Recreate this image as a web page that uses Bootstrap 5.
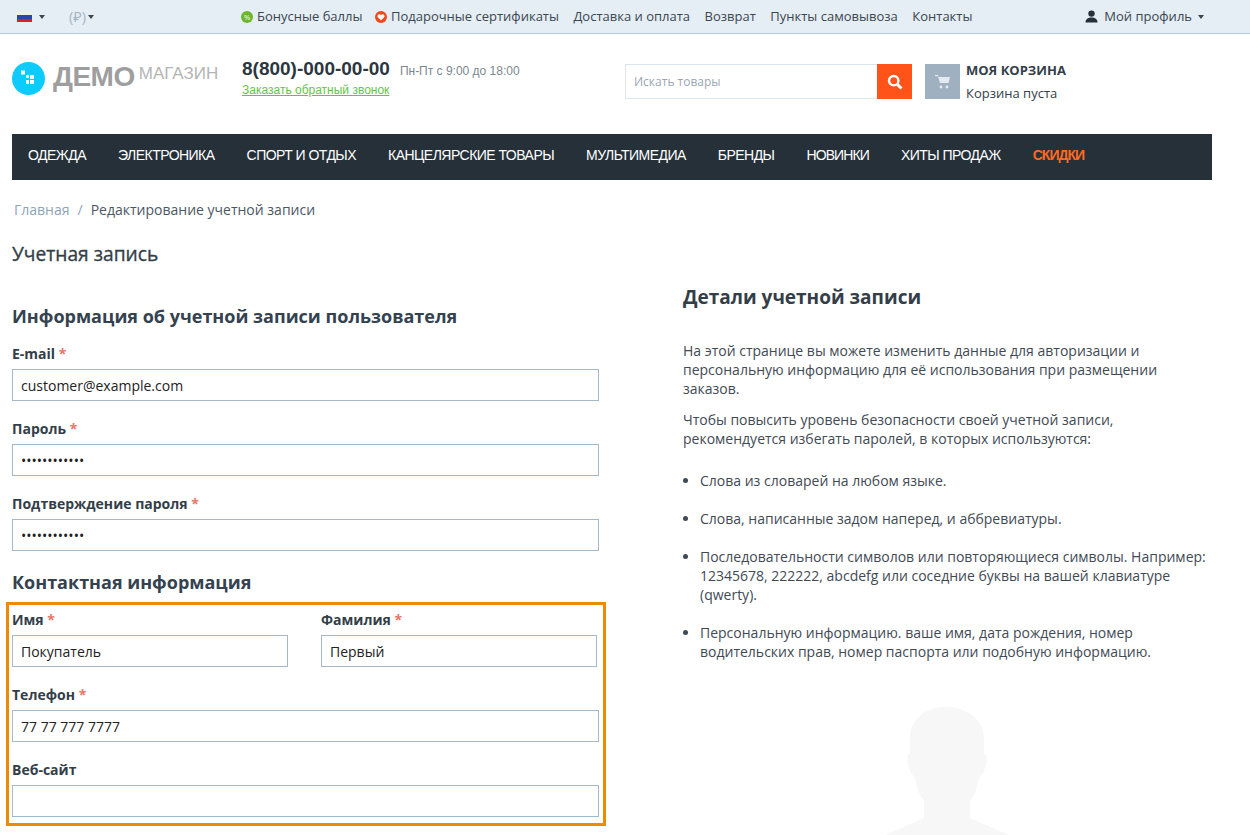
<!DOCTYPE html>
<html lang="ru">
<head>
<meta charset="utf-8">
<title>Учетная запись</title>
<link href="https://cdn.jsdelivr.net/npm/bootstrap@5.3.0/dist/css/bootstrap.min.css" rel="stylesheet">
<style>
html,body{height:835px;overflow:hidden}
body{font-family:"Open Sans","Noto Sans",sans-serif;font-size:13px;color:#333e48;background:#fff;line-height:19px}
a{text-decoration:none;color:inherit}
.topstrip{height:34px;background:#e5eef4;border-bottom:1px solid #b3cad8;font-size:13px;color:#3b4650}
.wrapbox{width:1200px;margin-left:12px}
.caret-mini{display:inline-block;border-top:4px solid #3b4650;border-left:3px solid transparent;border-right:3px solid transparent;vertical-align:middle}
.flag-ru{width:15px;height:10px;display:block;background:linear-gradient(#eee 0 33%,#2b45a8 33% 66%,#d8202c 66%)}
.cur-dim{color:#a5b7c6;font-size:14.5px}
.toplinks{gap:14.5px;margin-left:147px}
.toplinks .gift{margin-left:-2px}
.midrow{height:100px}
.logo-text{font-family:"Liberation Sans",sans-serif;font-weight:700;font-size:28px;color:#9e9e9e;letter-spacing:-.5px;line-height:1;margin-top:-4px}
.logo-sub{font-family:"Liberation Sans",sans-serif;font-size:17px;color:#b4b4b4;line-height:1;margin-top:-10px}
.phone{font-family:"Liberation Sans",sans-serif;font-size:19px;font-weight:700;color:#2b3640;line-height:22px}
.hours{font-family:"Liberation Sans",sans-serif;font-size:12px;color:#7b8790;margin-left:10px}
.callback{font-family:"Liberation Sans",sans-serif;font-size:12px;color:#6abf4b;text-decoration:underline;line-height:14px;display:block;margin-top:2px}
.searchbox{width:252px;height:35px;border:1px solid #dbe5ed;border-right:0;font-size:12px;color:#9aa6b2;padding-left:8px}
.searchgo{width:35px;height:35px;background:#ff5319}
.cartsq{width:35px;height:35px;background:#9fb1c0}
.cart-title{font-weight:700;font-size:13px;line-height:19px;color:#333e48}
.mainnav{height:46px;background:#253039;font-family:"Liberation Sans",sans-serif;font-size:14px;letter-spacing:-.53px;color:#fff;padding:0 0 4px 16px;gap:32px}
.mainnav .tightitem{letter-spacing:-.9px}
.mainnav .sale{color:#ff6a1f;font-weight:700;letter-spacing:-1px}
.crumbs{margin-top:20px;height:19px;padding-left:2px;font-size:14px;color:#4b5863}
.crumbs a{color:#8da3b6}
.crumbs i{font-style:normal;color:#8da3b6;margin:0 8px}
.pagetitle{font-size:19.2px;font-weight:400;-webkit-text-stroke:.35px #333e48;line-height:27px;margin:21px 0 0}
.leftcol{width:587px;margin-top:37px}
.rightcol{width:529px;margin-left:84px;margin-top:18px;font-size:14px;color:#3f4a54}
.sechead{font-size:18px;font-weight:700;line-height:24px;color:#34424f;margin:0 0 16px}
.sechead.secnext{margin-top:19px}
.fieldlbl{font-size:14px;font-weight:700;display:block;line-height:19px;margin:0 0 6px;color:#333e48}
.fieldlbl em{font-style:normal;color:#e8766a}
.fieldinp{display:block;width:100%;height:32px;border:1px solid #a5b8c8;border-radius:0;padding:0 8px;font-size:14px;font-family:inherit;color:#222;background:#fff;outline:0}
.fieldset-g{margin-bottom:18px}
.fieldset-g.lastinp{margin-bottom:0}
.hilite{position:absolute;left:6px;top:602px;width:600px;height:224px;border:3px solid #ee8a00;pointer-events:none}
.detailhead{font-size:19px;font-weight:700;line-height:25px;margin:0 0 31px;color:#333e48}
.rightcol p{margin:0 0 12px}
.rightcol p.lastp{margin-bottom:23px}
.tips{padding-left:17px;margin:0}
.tips li{margin-bottom:19px}
.silhouette{position:absolute;left:885px;top:706px;width:124px;height:129px}
</style>
</head>
<body>
<div class="topstrip">
  <div class="wrapbox d-flex align-items-center h-100 position-relative">
    <div class="d-flex align-items-center" style="gap:7px;margin-left:5px"><span class="flag-ru"></span><span class="caret-mini"></span></div>
    <div class="d-flex align-items-center cur-dim" style="gap:2px;margin-left:24px"><span>(₽)</span><span class="caret-mini"></span></div>
    <div class="d-flex align-items-center toplinks">
      <a class="d-flex align-items-center" style="gap:4px" href="#"><svg width="12" height="12" viewBox="0 0 12 12"><circle cx="6" cy="6" r="6" fill="#6cb52d"/><text x="6" y="8.5" font-size="7" font-weight="700" fill="#d9efc6" text-anchor="middle" font-family="Liberation Sans">%</text></svg>Бонусные баллы</a>
      <a class="d-flex align-items-center gift" style="gap:4px" href="#"><svg width="12" height="12" viewBox="0 0 12 12"><circle cx="6" cy="6" r="6" fill="#f0491d"/><path d="M6 9.3 3 6.4a1.7 1.7 0 0 1 0-2.5 1.8 1.8 0 0 1 3 .5 1.8 1.8 0 0 1 3-.5 1.7 1.7 0 0 1 0 2.5z" fill="#fff"/></svg>Подарочные сертификаты</a>
      <a href="#">Доставка и оплата</a>
      <a href="#">Возврат</a>
      <a href="#">Пункты самовывоза</a>
      <a href="#">Контакты</a>
    </div>
    <div class="d-flex align-items-center ms-auto" style="gap:6px;margin-right:8px">
      <svg width="13" height="13" viewBox="0 0 13 13"><circle cx="6.5" cy="3.6" r="3.2" fill="#253039"/><path d="M.5 12.5c0-3.4 2.4-5 6-5s6 1.6 6 5z" fill="#253039"/></svg>
      <span>Мой профиль</span><span class="caret-mini"></span>
    </div>
  </div>
</div>
<div class="wrapbox">
  <div class="midrow d-flex align-items-start">
    <div class="d-flex align-items-center" style="margin-top:28px;width:230px">
      <svg width="33" height="33" viewBox="0 0 33 33"><circle cx="16.5" cy="16.5" r="16.5" fill="#0ccbff"/><g fill="#fff"><rect x="9" y="8.5" width="4" height="4"/><rect x="14" y="13" width="3" height="3"/><rect x="18" y="13" width="4" height="4"/><rect x="18" y="18" width="4" height="4"/><rect x="14" y="18" width="3" height="4"/></g></svg>
      <span class="logo-text ms-2">ДЕМО</span><span class="logo-sub ms-1">МАГАЗИН</span>
    </div>
    <div style="margin-top:24px;width:383px">
      <div class="d-flex align-items-baseline"><span class="phone">8(800)-000-00-00</span><span class="hours">Пн-Пт с 9:00 до 18:00</span></div>
      <a class="callback" href="#">Заказать обратный звонок</a>
    </div>
    <div class="d-flex" style="margin-top:30px"><div class="searchbox d-flex align-items-center">Искать товары</div>
      <div class="searchgo d-flex align-items-center justify-content-center"><svg width="16" height="16" viewBox="0 0 16 16" fill="none" stroke="#fff"><circle cx="6.7" cy="6.7" r="4.7" stroke-width="2.4"/><path d="m10.2 10.2 4.3 4.3" stroke-width="3"/></svg></div>
    </div>
    <div class="d-flex" style="margin-top:27px;margin-left:13px">
      <div class="cartsq d-flex align-items-center justify-content-center" style="margin-top:3px"><svg width="16" height="15" viewBox="0 0 16 15" fill="#e4ebf0"><path d="M0 1h3l.6 2H15l-1.5 6H5L3 2.2H0z"/><circle cx="6" cy="13" r="1.4"/><circle cx="12" cy="13" r="1.4"/></svg></div>
      <div style="margin-left:6px"><div class="cart-title">МОЯ КОРЗИНА</div><div style="margin-top:4px">Корзина пуста</div></div>
    </div>
  </div>
  <nav class="mainnav d-flex align-items-center">
    <a href="#">ОДЕЖДА</a><a href="#">ЭЛЕКТРОНИКА</a><a href="#">СПОРТ И ОТДЫХ</a><a href="#">КАНЦЕЛЯРСКИЕ ТОВАРЫ</a><a href="#">МУЛЬТИМЕДИА</a><a href="#">БРЕНДЫ</a><a href="#" class="tightitem">НОВИНКИ</a><a href="#">ХИТЫ ПРОДАЖ</a><a href="#" class="sale">СКИДКИ</a>
  </nav>
  <div class="crumbs"><a href="#">Главная</a><i>/</i>Редактирование учетной записи</div>
  <h1 class="pagetitle">Учетная запись</h1>
  <div class="d-flex">
    <div class="leftcol">
      <h2 class="sechead">Информация об учетной записи пользователя</h2>
      <div class="fieldset-g"><label class="fieldlbl">E-mail <em>*</em></label><input class="fieldinp" value="customer@example.com"></div>
      <div class="fieldset-g"><label class="fieldlbl">Пароль <em>*</em></label><input class="fieldinp" type="password" value="123456789012"></div>
      <div class="fieldset-g lastinp"><label class="fieldlbl">Подтверждение пароля <em>*</em></label><input class="fieldinp" type="password" value="123456789012"></div>
      <h2 class="sechead secnext">Контактная информация</h2>
      <div>
        <div class="d-flex justify-content-between fieldset-g" style="margin-right:2px">
          <div style="width:276px"><label class="fieldlbl">Имя <em>*</em></label><input class="fieldinp" value="Покупатель"></div>
          <div style="width:276px"><label class="fieldlbl">Фамилия <em>*</em></label><input class="fieldinp" value="Первый"></div>
        </div>
        <div class="fieldset-g"><label class="fieldlbl">Телефон <em>*</em></label><input class="fieldinp" value="77 77 777 7777"></div>
        <div><label class="fieldlbl">Веб-сайт</label><input class="fieldinp"></div>
      </div>
    </div>
    <div class="rightcol">
      <h2 class="detailhead">Детали учетной записи</h2>
      <p>На этой странице вы можете изменить данные для авторизации и персональную информацию для её использования при размещении заказов.</p>
      <p class="lastp">Чтобы повысить уровень безопасности своей учетной записи, рекомендуется избегать паролей, в которых используются:</p>
      <ul class="tips">
        <li>Слова из словарей на любом языке.</li>
        <li>Слова, написанные задом наперед, и аббревиатуры.</li>
        <li>Последовательности символов или повторяющиеся символы. Например: 12345678, 222222, abcdefg или соседние буквы на вашей клавиатуре (qwerty).</li>
        <li>Персональную информацию. ваше имя, дата рождения, номер водительских прав, номер паспорта или подобную информацию.</li>
      </ul>
    </div>
  </div>
</div>
<div class="hilite"></div>
<svg class="silhouette" viewBox="0 0 124 129"><path fill="#f7f7f7" d="M61 1C41 1 25 13 25 33v14l-2 2c-2 4 0 16 7 23 2 10 4 17 9 22v18L0 129h124L85 112V94c5-5 7-12 9-22 7-7 9-19 7-23l-2-2V33C99 13 81 1 61 1z"/></svg>
<script src="https://cdn.jsdelivr.net/npm/bootstrap@5.3.0/dist/js/bootstrap.bundle.min.js"></script>
</body>
</html>
